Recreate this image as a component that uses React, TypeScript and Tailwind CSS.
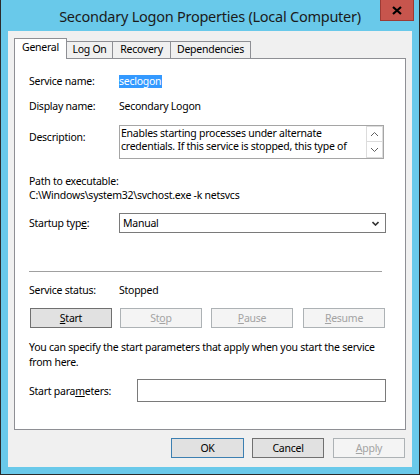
import React from "react";

const F = { fontFamily: '"Noto Sans", "Liberation Sans", sans-serif' };

function Btn({ children, w, disabled, primary }: { children: React.ReactNode; w: string; disabled?: boolean; primary?: boolean }) {
  const base = "h-[20px] flex items-center justify-center leading-[14px] border ";
  const cls = disabled
    ? "bg-[#f4f4f4] border-[#adb2b5] text-[#a3a3a3]"
    : primary
    ? "bg-[#e1e1e1] border-[#3c7fb1] text-black"
    : "bg-[#e1e1e1] border-[#707070] text-black";
  return <div className={base + cls + " " + w}>{children}</div>;
}

export default function App() {
  return (
    <div className="w-[420px] h-[475px] relative bg-[#69c9ea] border-x border-b border-[#2b2b2b] flex flex-col" style={F}>
      <div className="h-[31px] shrink-0 flex items-center justify-center">
        <span className="text-[14.5px] tracking-[-0.25px] text-[#1b1b1b] leading-[20px]">Secondary Logon Properties (Local Computer)</span>
      </div>
      <div className="absolute top-0 right-[5px] w-[34px] h-[21px] bg-[#c7554d] border border-[#9c3b35] border-t-0 flex items-center justify-center">
        <svg width="10" height="9" viewBox="0 0 10 9">
          <path d="M1 1 L9 8 M9 1 L1 8" stroke="#000" strokeWidth="2.2" />
        </svg>
      </div>
      <div className="mx-[7px] mb-[7px] flex-1 bg-[#f0f0f0] flex flex-col text-[10.5px] tracking-[-0.25px] text-black">
        <div className="mt-[7px] ml-[6px] flex items-end h-[20px]">
          <div className="relative z-10 w-[53px] h-[21px] -mb-px bg-white border border-b-0 border-[#8e8f94] flex items-center justify-center pb-[2px]">General</div>
          <div className="w-[46px] h-[17px] bg-[#f0f0f0] border-t border-r border-[#8e8f94] flex items-center justify-center">Log On</div>
          <div className="w-[58px] h-[17px] bg-[#f0f0f0] border-t border-r border-[#8e8f94] flex items-center justify-center">Recovery</div>
          <div className="w-[80px] h-[17px] bg-[#f0f0f0] border-t border-r border-[#8e8f94] flex items-center justify-center">Dependencies</div>
        </div>
        <div className="ml-[6px] w-[392px] h-[372px] bg-white border border-[#8e8f94] flex flex-col pl-[14px] leading-[14px]">
          <div className="mt-[15px] h-[14px] flex items-center">
            <span className="w-[90px]">Service name:</span>
            <span className="bg-[#3399ff] text-white leading-[13px] h-[13px] pr-[1px]">seclogon</span>
          </div>
          <div className="mt-[11px] h-[14px] flex items-center">
            <span className="w-[90px]">Display name:</span>
            <span>Secondary Logon</span>
          </div>
          <div className="mt-[12px] h-[34px] flex items-start">
            <span className="w-[90px] pt-[5px]">Description:</span>
            <div className="w-[265px] h-[34px] border border-[#a5a5a5] flex">
              <div className="flex-1 pl-[1px] pt-[1px] leading-[13px] overflow-hidden whitespace-nowrap">
                <div>Enables starting processes under alternate</div>
                <div>credentials. If this service is stopped, this type of</div>
              </div>
              <div className="w-[17px] flex flex-col">
                <div className="h-[16px] border border-[#dcdcdc] flex items-center justify-center">
                  <svg width="9" height="6" viewBox="0 0 9 6"><path d="M1 5 L4.5 1.5 L8 5" stroke="#606060" strokeWidth="1" fill="none" /></svg>
                </div>
                <div className="h-[16px] border border-[#dcdcdc] border-t-0 flex items-center justify-center">
                  <svg width="9" height="6" viewBox="0 0 9 6"><path d="M1 1 L4.5 4.5 L8 1" stroke="#606060" strokeWidth="1" fill="none" /></svg>
                </div>
              </div>
            </div>
          </div>
          <div className="mt-[15px] h-[14px] flex items-center">Path to executable:</div>
          <div className="h-[14px] flex items-center">C:\Windows\system32\svchost.exe -k netsvcs</div>
          <div className="mt-[11px] h-[20px] flex items-center">
            <span className="w-[90px]">Startup typ<u>e</u>:</span>
            <div className="w-[267px] h-[20px] border border-[#7a7a7a] flex items-center justify-between pl-[3px] pr-[6px]">
              <span>Manual</span>
              <svg width="7" height="5" viewBox="0 0 7 5"><path d="M0.5 1 L3.5 4 L6.5 1" stroke="#333" strokeWidth="1.6" fill="none" /></svg>
            </div>
          </div>
          <div className="mt-[38px] h-px w-[353px] bg-[#a0a0a0]" />
          <div className="mt-[11px] h-[14px] flex items-center">
            <span className="w-[90px]">Service status:</span>
            <span>Stopped</span>
          </div>
          <div className="mt-[11px] flex ml-[1px]">
            <Btn w="w-[82px]"><u>S</u>tart</Btn>
            <div className="ml-[8px]"><Btn w="w-[82px]" disabled>St<u>o</u>p</Btn></div>
            <div className="ml-[9px]"><Btn w="w-[82px]" disabled><u>P</u>ause</Btn></div>
            <div className="ml-[10px]"><Btn w="w-[82px]" disabled><u>R</u>esume</Btn></div>
          </div>
          <div className="mt-[12px] leading-[15px] whitespace-nowrap">
            <div>You can specify the start parameters that apply when you start the service</div>
            <div>from here.</div>
          </div>
          <div className="mt-[9px] h-[23px] flex items-center">
            <span className="w-[108px]">Start para<u>m</u>eters:</span>
            <div className="w-[249px] h-[23px] border border-[#7a7a7a] bg-white" />
          </div>
        </div>
        <div className="mt-[8px] flex justify-end pr-[7px]">
          <Btn w="w-[73px]" primary>OK</Btn>
          <div className="ml-[8px]"><Btn w="w-[72px]">Cancel</Btn></div>
          <div className="ml-[9px]"><Btn w="w-[72px]" disabled><u>A</u>pply</Btn></div>
        </div>
      </div>
    </div>
  );
}
